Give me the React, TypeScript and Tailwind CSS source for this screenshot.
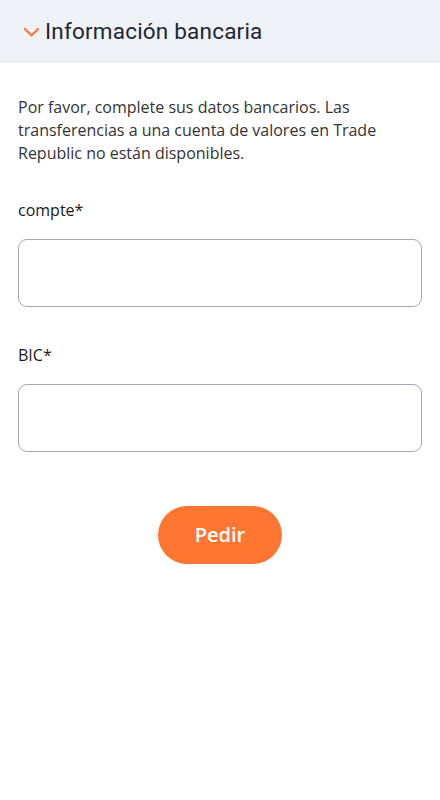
import { useState } from "react";

export default function App() {
    const [iban, setIban] = useState("");
    const [bic, setBic] = useState("");

    return (
        <div className="min-h-[800px] w-full bg-white" style={{ fontFamily: '"Open Sans", sans-serif' }}>
            <header className="h-[62px] bg-[#eff2f7] border-b border-[#e3e6ea] shadow-[0_1px_2px_rgba(0,0,0,0.04)] flex items-center pl-[23px] pt-[3px]">
                <svg width="17" height="12" viewBox="0 0 17 12" className="mt-[-1px]">
                    <path d="M2 3 L8.5 9.5 L15 3" fill="none" stroke="#f4793b" strokeWidth="2.2" strokeLinecap="round" strokeLinejoin="round" />
                </svg>
                <h1 className="ml-[5px] text-[22.5px] font-normal tracking-[0.2px] text-[#1e2535]" style={{ fontFamily: "Roboto, sans-serif" }}>
                    Información bancaria
                </h1>
            </header>

            <main className="px-[18px]">
                <p className="mt-[34px] text-[16px] leading-[23px] text-[#333333]">
                    Por favor, complete sus datos bancarios. Las transferencias a una cuenta de valores en Trade Republic no están disponibles.
                </p>

                <label className="block mt-[33px] text-[16px] text-[#1a1a1a]">compte*</label>
                <input
                    value={iban}
                    onChange={(e) => setIban(e.target.value)}
                    className="mt-[17px] block w-full h-[68px] rounded-[9px] border border-[#a6a6bd] px-4 outline-none"
                />

                <label className="block mt-[36px] text-[16px] text-[#1a1a1a]">BIC*</label>
                <input
                    value={bic}
                    onChange={(e) => setBic(e.target.value)}
                    className="mt-[17px] block w-full h-[68px] rounded-[9px] border border-[#a6a6bd] px-4 outline-none"
                />

                <div className="flex justify-center mt-[54px]">
                    <button className="w-[124px] h-[58px] rounded-full bg-[#ff7532] text-white text-[20px] font-semibold">
                        Pedir
                    </button>
                </div>
            </main>
        </div>
    );
}
